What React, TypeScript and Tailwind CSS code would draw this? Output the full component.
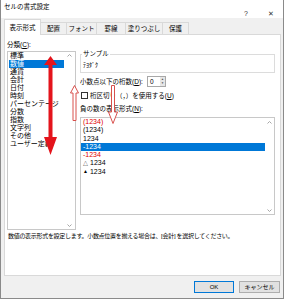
import React from "react";

interface NegativeFormat {
  text: string;
  mark?: string;
  red?: boolean;
  selected?: boolean;
}

const CATEGORIES = [
  "標準",
  "数値",
  "通貨",
  "会計",
  "日付",
  "時刻",
  "パーセンテージ",
  "分数",
  "指数",
  "文字列",
  "その他",
  "ユーザー定義",
];

const NEGATIVES: NegativeFormat[] = [
  { text: "(1234)", red: true },
  { text: "(1234)" },
  { text: "1234" },
  { text: "-1234", selected: true },
  { text: "-1234", red: true },
  { text: "1234", mark: "△" },
  { text: "1234", mark: "▲" },
];

// tab widths measured off the screenshot
const TABS = [
  { label: "表示形式", width: "w-[37px]", active: true },
  { label: "配置", width: "w-[26px]" },
  { label: "フォント", width: "w-[30px]" },
  { label: "罫線", width: "w-[29px]" },
  { label: "塗りつぶし", width: "w-[37px]" },
  { label: "保護", width: "w-[26px]" },
];

const Chevron = ({ down }: { down?: boolean }) => (
  <svg width="5" height="3" viewBox="0 0 5 3" className="block">
    <polyline
      points={down ? "0.5,0.5 2.5,2.5 4.5,0.5" : "0.5,2.5 2.5,0.5 4.5,2.5"}
      fill="none"
      stroke="#a6a6a6"
      strokeWidth="1"
    />
  </svg>
);

const App = () => {
  return (
    <div className="relative w-[284px] h-[299px] bg-[#f0f0f0] border-x border-b border-[#8a8a8a] flex flex-col overflow-hidden text-black font-['Liberation_Sans','Noto_Sans_CJK_JP',sans-serif]">
      {/* Title bar */}
      <div className="h-[18px] bg-white flex items-start pl-[3px] pr-[7px]">
        <span className="mt-[3px] text-[6.5px] leading-[8px]">セルの書式設定</span>
        <div className="ml-auto mt-[10px] flex gap-[15px] text-[7px] leading-[8px] text-[#333]">
          <span className="w-[10px] text-center">?</span>
          <span className="w-[10px] text-center">✕</span>
        </div>
      </div>

      {/* Tabs */}
      <div className="h-[16px] flex items-end pl-[3px]">
        {TABS.map((tab) =>
          tab.active ? (
            <div
              key={tab.label}
              className={`${tab.width} h-[16px] -mb-px relative z-10 bg-white border border-b-0 border-[#d9d9d9] flex items-center justify-center text-[6.5px] leading-[8px]`}
            >
              {tab.label}
            </div>
          ) : (
            <div
              key={tab.label}
              className={`${tab.width} h-[12px] border border-b-0 border-l-0 border-[#d9d9d9] flex items-center justify-center text-[6.5px] leading-[8px]`}
            >
              {tab.label}
            </div>
          )
        )}
      </div>

      {/* Tab page */}
      <div className="ml-[3px] mr-[2px] h-[242px] bg-white border border-[#d9d9d9] flex flex-col">
        <div className="flex">
          {/* Category list */}
          <div className="ml-[2px] w-[69px] pt-[6px]">
            <div className="h-[8px] text-[6.5px] leading-[8px]">
              分類(<span className="underline">C</span>):
            </div>
            <div className="mt-[2px] h-[179px] border border-[#c8c8c8] flex">
              <div className="flex-1 pl-[1px]">
                {CATEGORIES.map((c, i) => (
                  <div
                    key={c}
                    className={`h-[8px] leading-[8px] text-[7px] pl-[1px] whitespace-nowrap ${
                      i === 1 ? "bg-[#0078d7] text-white" : ""
                    }`}
                  >
                    {c}
                  </div>
                ))}
              </div>
              <div className="w-[11px] flex flex-col items-center justify-between py-[2px]">
                <Chevron />
                <Chevron down />
              </div>
            </div>
          </div>

          {/* Right side */}
          <div className="ml-[4px] w-[195px] pt-[15px]">
            <fieldset className="border border-[#dcdcdc] px-[1px] pb-[3px]">
              <legend className="text-[6.5px] leading-[8px] px-[1px]">サンプル</legend>
              <div className="pt-[3px] h-[11px] text-[6px] leading-[8px] pl-[1px]">ﾃﾖﾀﾞｸ</div>
            </fieldset>

            <div className="mt-[3px] h-[11px] flex items-center">
              <span className="w-[67px] text-[6.5px] leading-[8px] whitespace-nowrap">
                小数点以下の桁数(<span className="underline">D</span>):
              </span>
              <div className="w-[19px] h-[11px] border border-[#a8a8a8] flex">
                <span className="flex-1 text-[6.5px] leading-[9px] pl-[2px]">0</span>
                <div className="w-[5px] flex flex-col gap-px bg-[#e6e6e6] py-px">
                  <div className="flex-1 flex items-center justify-center text-[3px] leading-none text-[#555]">▲</div>
                  <div className="flex-1 flex items-center justify-center text-[3px] leading-none text-[#555]">▼</div>
                </div>
              </div>
            </div>

            <div className="mt-[4px] h-[9px] flex items-center">
              <div className="ml-[1px] w-[7px] h-[7px] border border-[#333] bg-white" />
              <span className="ml-[2px] text-[6.5px] leading-[8px] whitespace-nowrap">
                桁区切り（，）を使用する(<span className="underline">U</span>)
              </span>
            </div>

            <div className="mt-[5px] h-[8px] text-[6.5px] leading-[8px]">
              負の数の表示形式(<span className="underline">N</span>):
            </div>

            <div className="mt-[4px] h-[98px] border border-[#c8c8c8] flex">
              <div className="flex-1">
                {NEGATIVES.map((n, i) => (
                  <div
                    key={i}
                    className={`h-[8.3px] leading-[8.3px] text-[7px] pl-[2px] whitespace-nowrap flex items-center ${
                      n.selected ? "bg-[#0078d7] text-white" : n.red ? "text-[#e00000]" : ""
                    }`}
                  >
                    {n.mark && <span className="text-[5px] leading-none mr-[2px]">{n.mark}</span>}
                    {n.text}
                  </div>
                ))}
              </div>
              <div className="w-[9px] flex flex-col items-center justify-between pt-[3px] pb-[2px]">
                <Chevron />
                <Chevron down />
              </div>
            </div>
          </div>
        </div>

        <div className="mt-[2px] h-[8px] pl-[3px] text-[6px] leading-[8px] tracking-[-0.3px] whitespace-nowrap">
          数値の表示形式を設定します。小数点位置を揃える場合は、[会計] を選択してください。
        </div>
      </div>

      {/* Buttons */}
      <div className="flex-1 flex items-center justify-end gap-[5px] pr-[3px]">
        <button className="w-[40px] h-[12px] bg-[#e1e1e1] border border-[#0078d7] text-[6px] leading-[10px]">
          OK
        </button>
        <button className="w-[41px] h-[12px] bg-[#e1e1e1] border border-[#adadad] text-[6px] leading-[10px]">
          キャンセル
        </button>
      </div>

      {/* Annotation arrows drawn over the dialog */}
      <svg className="absolute left-[43px] top-[56px]" width="13" height="100" viewBox="0 0 13 100">
        <polygon
          points="6.5,0 0,9 4.5,9 4.5,81 0,81 6.5,99 13,81 8.5,81 8.5,9 13,9"
          fill="#e4141c"
        />
      </svg>
      <svg className="absolute left-[69px] top-[85px]" width="9" height="36" viewBox="0 0 9 36">
        <polygon
          points="4.5,0.5 0.5,8 3,8 3,35.5 6,35.5 6,8 8.5,8"
          fill="white"
          stroke="#d8504c"
          strokeWidth="1"
        />
      </svg>
      <svg className="absolute left-[107px] top-[85px]" width="10" height="39" viewBox="0 0 10 39">
        <polygon
          points="3.5,0.5 6.5,0.5 6.5,27 9.5,27 5,38.5 0.5,27 3.5,27"
          fill="white"
          stroke="#d8504c"
          strokeWidth="1"
        />
      </svg>
    </div>
  );
};

export default App;
